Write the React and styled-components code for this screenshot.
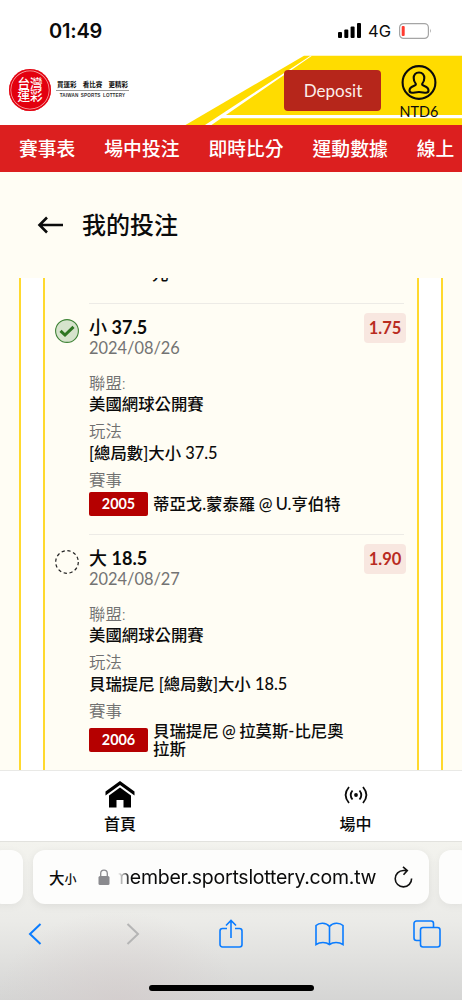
import styled, { createGlobalStyle } from 'styled-components';

const GlobalStyle = createGlobalStyle`
  * {
    box-sizing: border-box;
  }
  body {
    margin: 0;
    background: #fff;
    color: #0b0b0b;
    font-family: Lato, 'Noto Sans CJK TC', sans-serif;
  }
`;

const Screen = styled.div`
  display: flex;
  flex-direction: column;
  width: 462px;
  height: 1000px;
  overflow: hidden;
`;

const StatusBar = styled.div`
  display: flex;
  align-items: center;
  flex: none;
  height: 55px;
  padding: 6px 30px 0 49px;
  font-family: Inter, sans-serif;
`;

const Clock = styled.div`
  flex: 1;
  font-size: 20px;
  font-weight: 600;
  letter-spacing: -0.2px;
`;

const Network = styled.span`
  margin: 0 8px 0 7px;
  font-size: 16.5px;
  font-weight: 400;
`;

const Header = styled.header`
  position: relative;
  display: flex;
  flex: none;
  height: 70px;
`;

const HeaderArt = styled.svg`
  position: absolute;
  inset: 0;
  z-index: -1;
`;

const Brand = styled.div`
  display: flex;
  align-items: center;
  flex: 1;
  padding: 0 0 0 9px;
`;

const Seal = styled.div`
  display: flex;
  flex-direction: column;
  align-items: center;
  justify-content: center;
  width: 42px;
  height: 42px;
  border-radius: 50%;
  background: #e3000f;
  color: #fff;
  font-size: 12.6px;
  font-weight: 500;
  line-height: 12.5px;
  box-shadow: inset 0 0 0 1.5px #e3000f, inset 0 0 0 2.2px #f7b3b3;
`;

const Slogan = styled.div`
  width: 73px;
  margin: 0 0 0 5px;
  text-align: center;
`;

const SloganZh = styled.div`
  display: flex;
  justify-content: space-between;
  height: 11px;
  padding: 0 1px;
  border-bottom: 1px solid #999;
  font-size: 6.5px;
  font-weight: 700;
  line-height: 9px;
`;

const SloganEn = styled.div`
  padding-top: 1px;
  color: #333;
  font-family: 'Liberation Sans', sans-serif;
  font-size: 4.6px;
  font-weight: 700;
  line-height: 8px;
  letter-spacing: 0.15px;
  word-spacing: 1px;
  white-space: nowrap;
`;

const DepositButton = styled.button`
  width: 97px;
  height: 41px;
  margin-top: 15px;
  padding: 0 0 0 1px;
  border: 0;
  border-radius: 4px;
  background: #b6261b;
  color: #fbeeea;
  font-family: Lato, sans-serif;
  font-size: 17px;
`;

const Account = styled.div`
  display: flex;
  flex-direction: column;
  align-items: center;
  width: 38px;
  margin: 10px 24px 0 19px;
  font-size: 14.4px;
  line-height: 15px;

  & svg {
    flex: none;
    margin-bottom: 4px;
  }
`;

const Nav = styled.nav`
  display: flex;
  align-items: center;
  flex: none;
  gap: 29px;
  height: 47px;
  padding: 0 0 2px 19px;
  background: #dc1f1f;
  color: #fff;
  font-size: 18.8px;
  font-weight: 500;
  white-space: nowrap;
`;

const PageTitle = styled.div`
  display: flex;
  align-items: center;
  flex: none;
  gap: 18px;
  height: 106px;
  padding: 0 0 3px 37px;
  background: #fffdf4;
  font-size: 24px;
  font-weight: 500;

  & svg {
    margin-top: 3px;
  }
`;

const Slides = styled.main`
  display: grid;
  grid-template-columns: 21px 376px 21px;
  gap: 22px;
  flex: none;
  height: 492px;
  overflow: hidden;
`;

const Slide = styled.section`
  overflow: hidden;
  border: solid #ffd92e;
  border-width: ${(props) => props.$edges || '0 2px'};
  background: #fffdf4;
`;

const Previous = styled.div`
  height: 25px;
  padding-left: 107px;
  overflow: hidden;
  font-size: 16.5px;
  font-weight: 500;
  line-height: 20px;

  & span {
    display: block;
    margin-top: -14px;
  }
`;

const Bet = styled.article`
  display: grid;
  grid-template-columns: 24px 315px;
  column-gap: 10px;
  height: 231px;
  padding-left: 10px;

  & > svg {
    margin-top: 16px;
  }
`;

const BetBody = styled.div`
  padding-top: 13px;
  border-top: 1.5px solid #edebe6;
`;

const BetHead = styled.div`
  display: flex;
  justify-content: space-between;
  margin: 0 -2px 14.5px 0;
`;

const Pick = styled.div`
  font-size: 18px;
  font-weight: 500;
  line-height: 21px;
`;

const BetDate = styled.div`
  color: #737373;
  font-size: 16.4px;
  line-height: 20px;
`;

const Odds = styled.div`
  display: grid;
  place-items: center;
  width: 42px;
  height: 30px;
  margin-top: -4px;
  border-radius: 4px;
  background: #f8e7e0;
  color: #b92b1f;
  font-size: 16.5px;
  font-weight: 700;
`;

const Label = styled.div`
  margin-bottom: 1.5px;
  color: #707070;
  font-size: 16.4px;
  font-weight: 350;
  line-height: 20px;
`;

const Value = styled.div`
  margin-bottom: 7px;
  font-size: 16.4px;
  font-weight: 500;
  line-height: 20px;
`;

const Match = styled.div`
  display: flex;
  align-items: center;
  gap: 5px;
  min-height: 26px;
  font-size: 16.4px;
  font-weight: 500;
  line-height: 18px;
`;

const MatchCode = styled.span`
  flex: none;
  width: 59px;
  height: 24px;
  margin-top: -1px;
  border-radius: 2px;
  background: #b50000;
  color: #fff;
  font-size: 14.4px;
  font-weight: 700;
  line-height: 24px;
  text-align: center;
`;

const Teams = styled.span`
  width: 196px;
  word-spacing: -0.7px;
`;

const TabBar = styled.div`
  display: grid;
  grid-template-columns: 240px 231px;
  flex: none;
  height: 71px;
  border-top: 1px solid #e9e9e6;
  background: #fff;
`;

const Tab = styled.div`
  display: flex;
  flex-direction: column;
  align-items: center;
  padding-top: 10px;
  font-size: 16px;
  font-weight: 500;
  line-height: 24px;

  & svg {
    margin-bottom: 4px;
  }
`;

const Browser = styled.footer`
  display: flex;
  flex-direction: column;
  align-items: center;
  flex: 1;
  border-top: 1px solid #e2e2de;
  background: radial-gradient(120px 90px at 118px 159px, rgba(211, 202, 202, 0.6), transparent),
    linear-gradient(#f3f3ee, #ebebe8 50%, #d5d5d4);
`;

const AddressRow = styled.div`
  display: flex;
  gap: 10px;
  width: 482px;
  height: 54px;
  margin-top: 8px;
`;

const SideTab = styled.div`
  width: 33px;
  border-radius: 12px;
  background: #fdfdfc;
  box-shadow: 0 2px 8px rgba(0, 0, 0, 0.05);
`;

const Address = styled.div`
  display: flex;
  align-items: center;
  width: 396px;
  padding: 0 16px 0 16px;
  border-radius: 12px;
  background: #fdfdfc;
  box-shadow: 0 2px 8px rgba(0, 0, 0, 0.07);
`;

const TextSize = styled.div`
  width: 49px;
  font-size: 15.5px;
  font-weight: 500;

  & small {
    font-size: 12px;
  }
`;

const Url = styled.div`
  flex: 1;
  margin-left: 8px;
  overflow: hidden;
  font-family: Inter, sans-serif;
  font-size: 19.5px;
  letter-spacing: -0.25px;
  white-space: nowrap;
  mask-image: linear-gradient(to right, transparent, #000 12px);

  & span {
    margin-left: -5px;
  }
`;

const Toolbar = styled.div`
  display: grid;
  grid-template-columns: repeat(5, 98px);
  place-items: center;
  height: 60px;
  color: #0a7cff;
`;

const HomeIndicator = styled.div`
  width: 165px;
  height: 6px;
  margin-top: 21px;
  border-radius: 3px;
  background: #000;
`;

const bets = [
  {
    side: '小',
    line: '37.5',
    date: '2024/08/26',
    odds: '1.75',
    league: '美國網球公開賽',
    play: '[總局數]大小 37.5',
    code: '2005',
    teams: '蒂亞戈.蒙泰羅 @ U.亨伯特',
    won: true,
  },
  {
    side: '大',
    line: '18.5',
    date: '2024/08/27',
    odds: '1.90',
    league: '美國網球公開賽',
    play: '貝瑞提尼 [總局數]大小 18.5',
    code: '2006',
    teams: '貝瑞提尼 @ 拉莫斯-比尼奧拉斯',
    won: false,
  },
];

function StatusIcon({ won }) {
  if (!won)
    return (
      <svg width="24" height="24" viewBox="0 0 24 24" fill="none">
        <circle cx="12" cy="12" r="11.3" stroke="#222" strokeWidth="1.2" strokeDasharray="3.3 2.62" />
      </svg>
    );
  return (
    <svg width="24" height="24" viewBox="0 0 24 24" fill="none">
      <circle cx="12" cy="12" r="11.4" fill="#d6e3cc" stroke="#3e8336" strokeWidth="1.1" />
      <path d="M5.500 11.800l4.500 4.200 8.500-8.200" stroke="#2e7522" strokeWidth="3" />
    </svg>
  );
}

function BetItem({ bet }) {
  return (
    <Bet>
      <StatusIcon won={bet.won} />
      <BetBody>
        <BetHead>
          <div>
            <Pick>
              {bet.side} <b>{bet.line}</b>
            </Pick>
            <BetDate>{bet.date}</BetDate>
          </div>
          <Odds>{bet.odds}</Odds>
        </BetHead>
        <Label>聯盟:</Label>
        <Value>{bet.league}</Value>
        <Label>玩法</Label>
        <Value>{bet.play}</Value>
        <Label>賽事</Label>
        <Match>
          <MatchCode>{bet.code}</MatchCode>
          <Teams>{bet.teams}</Teams>
        </Match>
      </BetBody>
    </Bet>
  );
}

function App() {
  return (
    <>
      <GlobalStyle />
      <Screen>
        <StatusBar>
          <Clock>01:49</Clock>
          <svg width="23" height="15" viewBox="0 0 23 15">
            <rect x="0" y="9" width="4" height="6" rx="1" />
            <rect x="6.3" y="6.5" width="4" height="8.5" rx="1" />
            <rect x="12.6" y="3.5" width="4" height="11.5" rx="1" />
            <rect x="19" y="0" width="4" height="15" rx="1" />
          </svg>
          <Network>4G</Network>
          <svg width="33" height="16" viewBox="0 0 33 16" fill="none">
            <rect x="0.6" y="0.6" width="28.8" height="14.8" rx="4" stroke="#a5a5a5" strokeWidth="1.2" />
            <rect x="2.7" y="3" width="3" height="10" rx="1" fill="#ff3b30" />
            <path d="M31 5.500q1.700 2.300 0 4.600z" fill="#a5a5a5" />
          </svg>
        </StatusBar>

        <Header>
          <HeaderArt width="462" height="70" viewBox="0 0 462 70">
            <path d="M304 .7H462V70H185.500z" fill="#ffdc00" />
            <path d="M310.500 .7h1.500L231 56.500 211.500 70H205z" fill="#fff" />
            <path d="M225 60H462v3.300H219z" fill="#fff" />
          </HeaderArt>
          <Brand>
            <Seal>
              <span>台灣</span>
              <span>運彩</span>
            </Seal>
            <Slogan>
              <SloganZh>
                <span>買運彩</span>
                <span>看比賽</span>
                <span>更精彩</span>
              </SloganZh>
              <SloganEn>TAIWAN SPORTS LOTTERY</SloganEn>
            </Slogan>
          </Brand>
          <DepositButton>Deposit</DepositButton>
          <Account>
            <svg width="36" height="35" viewBox="0 0 36 35" fill="none" stroke="#0b0b0b" strokeWidth="2.1">
              <circle cx="18" cy="17.500" r="16.400" />
              <path d="M18 7.500c-3.600 0-5.300 2.400-5.300 5.500 0 2.800.9 4.400 2 5.600.5 1.300-.3 1.800-2 2.400-2.700.9-4.200 2.400-4.200 4.600 0 1.400.9 2.200 2.400 2.200 2.500 0 4-.8 7.100-.8s4.600.8 7.100.8c1.500 0 2.400-.8 2.400-2.200 0-2.200-1.500-3.700-4.200-4.600-1.700-.6-2.500-1.100-2-2.400 1.100-1.200 2-2.800 2-5.600 0-3.100-1.700-5.500-5.300-5.500z" />
            </svg>
            NTD6
          </Account>
        </Header>

        <Nav>
          <span>賽事表</span>
          <span>場中投注</span>
          <span>即時比分</span>
          <span>運動數據</span>
          <span>線上</span>
        </Nav>

        <PageTitle>
          <svg width="27" height="18" viewBox="0 0 27 18" fill="none" stroke="#0b0b0b" strokeWidth="2.6">
            <path d="M26 9H2.500M10 1.500L2.500 9l7.500 7.500" />
          </svg>
          我的投注
        </PageTitle>

        <Slides>
          <Slide $edges="0 2px 0 0" />
          <Slide>
            <Previous>
              <span>元</span>
            </Previous>
            {bets.map((bet) => (
              <BetItem key={bet.code} bet={bet} />
            ))}
          </Slide>
          <Slide $edges="0 0 0 2px" />
        </Slides>

        <TabBar>
          <Tab>
            <svg width="30" height="27" viewBox="0 0 30 27">
              <path d="M15 0L.5 10.500v4L15 4l14.500 10.500v-4z" />
              <path d="M15 6.500L4 14.500V26.500h7.500V19h7v7.500H26V14.500z" />
            </svg>
            首頁
          </Tab>
          <Tab>
            <svg width="24" height="27" viewBox="0 0 24 27" fill="none" stroke="#0b0b0b" strokeWidth="1.8">
              <circle cx="12" cy="14" r="1.900" fill="#0b0b0b" stroke="none" />
              <path d="M8.500 9.500q-3.600 4.500 0 9M15.500 9.500q3.600 4.500 0 9M5 6q-6.800 8 0 16M19 6q6.800 8 0 16" />
            </svg>
            場中
          </Tab>
        </TabBar>

        <Browser>
          <AddressRow>
            <SideTab />
            <Address>
              <TextSize>
                大<small>小</small>
              </TextSize>
              <svg width="12" height="16" viewBox="0 0 12 16" fill="none">
                <rect x="0.500" y="7" width="11" height="9" rx="1.500" fill="#8a8a8e" />
                <path d="M2.700 7.500V4.500a3.300 3.300 0 0 1 6.600 0v3" stroke="#8a8a8e" strokeWidth="1.300" />
              </svg>
              <Url>
                <span>member.sportslottery.com.tw</span>
              </Url>
              <svg width="19" height="22" viewBox="0 0 19 22" fill="none" stroke="#111" strokeWidth="1.600">
                <path d="M17.600 12.500A8.200 8.200 0 1 1 9.500 4.500h4M9 .8l4.300 3.800L9.500 8.800" />
              </svg>
            </Address>
            <SideTab />
          </AddressRow>
          <Toolbar>
            <svg width="14" height="22" viewBox="0 0 14 22" fill="none" stroke="currentColor" strokeWidth="2">
              <path d="M12.500 1L2 11l10.500 10" />
            </svg>
            <svg width="14" height="22" viewBox="0 0 14 22" fill="none" stroke="#b5b5b5" strokeWidth="2">
              <path d="M1.500 1L12 11 1.500 21" />
            </svg>
            <svg width="24" height="30" viewBox="0 0 24 30" fill="none" stroke="currentColor" strokeWidth="1.600">
              <path d="M8 9.500H3.500a2.500 2.500 0 0 0-2.500 2.500V25.500a2.500 2.500 0 0 0 2.500 2.500h17a2.500 2.500 0 0 0 2.500-2.500V12a2.500 2.500 0 0 0-2.500-2.500H16M12 19V1.500M7 6.500l5-5 5 5" />
            </svg>
            <svg width="29" height="24" viewBox="0 0 29 24" fill="none" stroke="currentColor" strokeWidth="1.600">
              <path d="M14.500 4.500C11 0 4 .5 1 3.500V22.500c4-2.600 10-2.600 13.500 0 3.500-2.600 9.500-2.600 13.500 0V3.500C25 .5 18 0 14.500 4.500zV22.500" />
            </svg>
            <svg width="28" height="28" viewBox="0 0 28 28" fill="none" stroke="currentColor" strokeWidth="1.600">
              <rect x="7.500" y="7.500" width="19.500" height="19.500" rx="2.500" />
              <path d="M7.500 20.500H3.500A2.500 2.500 0 0 1 1 18V3.500A2.500 2.500 0 0 1 3.500 1H18a2.500 2.500 0 0 1 2.500 2.500v4" />
            </svg>
          </Toolbar>
          <HomeIndicator />
        </Browser>
      </Screen>
    </>
  );
}

export default App;
